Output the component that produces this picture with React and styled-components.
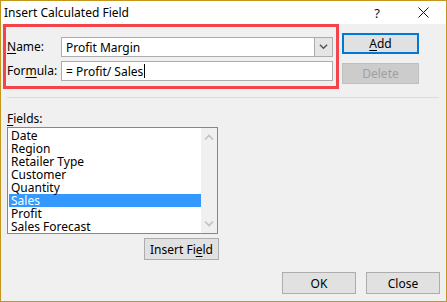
import React from "react";
import styled, { createGlobalStyle } from "styled-components";

const Global = createGlobalStyle`
  html, body { margin: 0; padding: 0; background: #f0f0f0; }
  body { font-family: "Noto Sans", "Open Sans", sans-serif; font-size: 12px; color: #000; }
  * { box-sizing: border-box; }
`;

const Dialog = styled.div`
  width: 447px;
  height: 302px;
  border: 1px solid #c4961b;
  background: #f0f0f0;
  display: flex;
  flex-direction: column;
  overflow: hidden;
`;

const TitleBar = styled.div`
  height: 23px;
  background: #fff;
  display: flex;
  align-items: center;
  padding-left: 3px;
`;

const Title = styled.div`
  flex: 1;
  font-size: 12px;
  line-height: 23px;
`;

const TitleButton = styled.div`
  width: 46px;
  height: 23px;
  display: flex;
  align-items: center;
  justify-content: center;
  font-size: 13px;
  color: #111;
`;

const Body = styled.div`
  flex: 1;
  display: flex;
  flex-direction: column;
`;

const TopRow = styled.div`
  display: flex;
  align-items: flex-start;
  padding-left: 2px;
  gap: 3px;
`;

const Highlight = styled.div`
  width: 336px;
  height: 65px;
  border: 3px solid #f2444a;
  padding: 10px 3px 0 1px;
  display: grid;
  grid-template-columns: 54px 272px;
  grid-auto-rows: 20px;
  row-gap: 4px;
  align-items: center;
`;

const Label = styled.label`
  font-size: 12px;
  line-height: 16px;
`;

const U = styled.span`
  text-decoration: underline;
  text-underline-offset: 2px;
`;

const Field = styled.div`
  height: 20px;
  border: 1px solid #acacac;
  background: #fff;
  display: flex;
  align-items: center;
  padding-left: 4px;
  font-size: 12px;
`;

const FieldText = styled.span`
  flex: 1;
  display: flex;
  align-items: center;
`;

const Caret = styled.span`
  display: inline-block;
  width: 1px;
  height: 14px;
  background: #000;
  margin-left: 1px;
`;

const DropButton = styled.div`
  width: 18px;
  height: 18px;
  background: #e5e5e5;
  border-left: 1px solid #acacac;
  display: flex;
  align-items: center;
  justify-content: center;
`;

const ButtonColumn = styled.div`
  display: flex;
  flex-direction: column;
  gap: 9px;
  padding-top: 9px;
`;

const Button = styled.div`
  width: ${(p) => p.$w || 74}px;
  height: ${(p) => p.$h || 22}px;
  background: ${(p) => (p.$disabled ? "#cccccc" : "#e1e1e1")};
  border: ${(p) =>
    p.$default ? "2px solid #0078d7" : p.$disabled ? "1px solid #bfbfbf" : "1px solid #adadad"};
  color: ${(p) => (p.$disabled ? "#a0a0a0" : "#000")};
  display: flex;
  align-items: center;
  justify-content: center;
  font-size: 12px;
`;

const Separator = styled.div`
  height: 1px;
  background: #dcdcdc;
  margin: 8px 7px 0 6px;
`;

const FieldsLabel = styled.div`
  margin: 13px 0 0 6px;
  line-height: 16px;
  font-size: 12px;
`;

const ListBox = styled.div`
  width: 211px;
  height: 107px;
  margin: 0 0 0 6px;
  border: 1px solid #828790;
  background: #fff;
  display: flex;
`;

const Items = styled.div`
  flex: 1;
  padding: 1px 0 0 1px;
`;

const Item = styled.div`
  height: 13px;
  line-height: 13px;
  padding-left: 2px;
  font-size: 12px;
  white-space: nowrap;
  background: ${(p) => (p.$selected ? "#3399ff" : "transparent")};
  color: ${(p) => (p.$selected ? "#fff" : "#000")};
`;

const Scroll = styled.div`
  width: 16px;
  background: #f0f0f0;
  display: flex;
  flex-direction: column;
  justify-content: space-between;
  align-items: center;
  padding: 6px 0 6px;
`;

const InsertRow = styled.div`
  display: flex;
  padding-left: 143px;
  margin-top: 4px;
`;

const BottomRow = styled.div`
  display: flex;
  justify-content: flex-end;
  gap: 10px;
  padding-right: 6px;
  margin-top: 12px;
`;

const Chevron = ({ up, color = "#c2c2c2", w = 10 }) => (
  <svg width={w} height="6" viewBox="0 0 10 6">
    <path
      d={up ? "M1 5.5 L5 1.5 L9 5.5" : "M1 0.5 L5 4.5 L9 0.5"}
      fill="none"
      stroke={color}
      strokeWidth="1.6"
    />
  </svg>
);

const fields = ["Date", "Region", "Retailer Type", "Customer", "Quantity", "Sales", "Profit", "Sales Forecast"];

export default function App() {
  return (
    <>
      <Global />
      <Dialog>
        <TitleBar>
          <Title>Insert Calculated Field</Title>
          <TitleButton>?</TitleButton>
          <TitleButton>
            <svg width="11" height="11" viewBox="0 0 11 11">
              <path d="M0.5 0.5 L10.5 10.5 M10.5 0.5 L0.5 10.5" stroke="#111" strokeWidth="1" />
            </svg>
          </TitleButton>
        </TitleBar>
        <Body>
          <TopRow>
            <Highlight>
              <Label>
                <U>N</U>ame:
              </Label>
              <Field>
                <FieldText>Profit Margin</FieldText>
                <DropButton>
                  <Chevron color="#555" w={9} />
                </DropButton>
              </Field>
              <Label>
                For<U>m</U>ula:
              </Label>
              <Field>
                <FieldText>
                  = Profit/ Sales
                  <Caret />
                </FieldText>
              </Field>
            </Highlight>
            <ButtonColumn>
              <Button $w={77} $h={21} $default>
                <span>
                  <U>A</U>dd
                </span>
              </Button>
              <Button $w={77} $h={21} $disabled>
                Delete
              </Button>
            </ButtonColumn>
          </TopRow>
          <Separator />
          <FieldsLabel>
            <U>F</U>ields:
          </FieldsLabel>
          <ListBox>
            <Items>
              {fields.map((f) => (
                <Item key={f} $selected={f === "Sales"}>
                  {f}
                </Item>
              ))}
            </Items>
            <Scroll>
              <Chevron up />
              <Chevron />
            </Scroll>
          </ListBox>
          <InsertRow>
            <Button $w={75}>
              <span>
                Insert Fi<U>e</U>ld
              </span>
            </Button>
          </InsertRow>
          <BottomRow>
            <Button>OK</Button>
            <Button>Close</Button>
          </BottomRow>
        </Body>
      </Dialog>
    </>
  );
}
